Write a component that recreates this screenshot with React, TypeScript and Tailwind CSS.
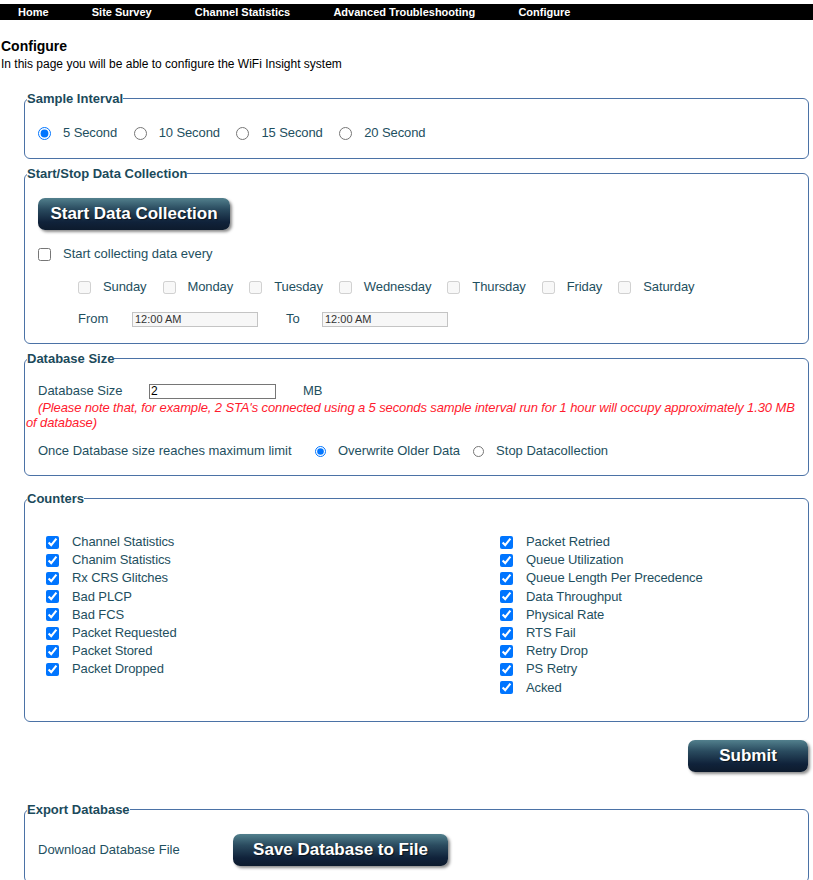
import React from "react";

const TEXT = "text-[#1e4f60]";

function Legend({ children }: { children: React.ReactNode }) {
  return (
    <legend className="ml-[2px] text-[13px] leading-[15px] font-bold text-[#1b4a5b]">
      {children}
    </legend>
  );
}

function DarkButton({ children, className }: { children: React.ReactNode; className: string }) {
  return (
    <button
      type="button"
      className={
        "h-[32px] rounded-[7px] bg-[linear-gradient(to_bottom,#52808d_0%,#2a4b5f_35%,#10223a_75%,#0d1b2d_100%)] text-white text-[17px] font-bold leading-[32px] shadow-[2px_2px_3px_rgba(0,0,0,0.45)] [text-shadow:1px_1px_1px_rgba(0,0,0,0.6)] " +
        className
      }
    >
      {children}
    </button>
  );
}

const leftCounters = [
  "Channel Statistics",
  "Chanim Statistics",
  "Rx CRS Glitches",
  "Bad PLCP",
  "Bad FCS",
  "Packet Requested",
  "Packet Stored",
  "Packet Dropped",
];
const rightCounters = [
  "Packet Retried",
  "Queue Utilization",
  "Queue Length Per Precedence",
  "Data Throughput",
  "Physical Rate",
  "RTS Fail",
  "Retry Drop",
  "PS Retry",
  "Acked",
];
const days = ["Sunday", "Monday", "Tuesday", "Wednesday", "Thursday", "Friday", "Saturday"];
const intervals = ["5 Second", "10 Second", "15 Second", "20 Second"];

function CounterCol({ items }: { items: string[] }) {
  return (
    <div className="flex flex-col">
      {items.map((it) => (
        <label key={it} className="flex h-[18.2px] items-center">
          <input type="checkbox" defaultChecked className="m-0 h-[13px] w-[13px]" />
          <span className="ml-[13px] text-[13px] leading-[16px] tracking-[-0.1px]">{it}</span>
        </label>
      ))}
    </div>
  );
}

export default function App() {
  return (
    <div className={"min-h-[880px] bg-white font-['Liberation_Sans',Arial,sans-serif] " + TEXT}>
      {/* Top navigation */}
      <div className="mt-[4px] flex h-[16px] items-center gap-[43.2px] bg-black pl-[18px] text-[11px] font-bold leading-[16px] text-white">
        <span>Home</span>
        <span>Site Survey</span>
        <span>Channel Statistics</span>
        <span>Advanced Troubleshooting</span>
        <span>Configure</span>
      </div>

      <div className="mt-[18px] pl-[1px] text-[14px] font-bold leading-[16px] text-black">Configure</div>
      <div className="mt-[3px] pl-[1px] text-[12px] leading-[14px] text-black">
        In this page you will be able to configure the WiFi Insight system
      </div>

      {/* Sample Interval */}
      <fieldset className="mt-[20px] ml-[24px] mr-[4px] rounded-[6px] border border-[#4b72a6] pt-[19px] pb-[17px]">
        <Legend>Sample Interval</Legend>
        <div className="flex h-[16px] items-center gap-[16.5px] pl-[13px] text-[13px] leading-[16px] tracking-[-0.1px]">
          {intervals.map((v, i) => (
            <label key={v} className="flex items-center">
              <input type="radio" name="interval" defaultChecked={i === 0} className="m-0 h-[13px] w-[13px]" />
              <span className="ml-[12px]">{v}</span>
            </label>
          ))}
        </div>
      </fieldset>

      {/* Start/Stop Data Collection */}
      <fieldset className="mt-[7px] ml-[24px] mr-[4px] rounded-[6px] border border-[#4b72a6] pt-[17px] pb-[16px]">
        <Legend>Start/Stop Data Collection</Legend>
        <div className="pl-[13px]">
          <DarkButton className="w-[192px]">Start Data Collection</DarkButton>
        </div>
        <label className="mt-[16px] flex h-[16px] items-center pl-[13px] text-[13px] leading-[16px]">
          <input type="checkbox" className="m-0 h-[13px] w-[13px]" />
          <span className="ml-[12px]">Start collecting data every</span>
        </label>
        <div className="mt-[17px] flex h-[16px] items-center gap-[16px] pl-[53px] text-[13px] leading-[16px] tracking-[-0.1px]">
          {days.map((d) => (
            <label key={d} className="flex items-center">
              <input type="checkbox" disabled className="m-0 h-[13px] w-[13px]" />
              <span className="ml-[12px]">{d}</span>
            </label>
          ))}
        </div>
        <div className="mt-[16px] flex h-[16px] items-center pl-[53px] text-[13px] leading-[16px]">
          <span className="w-[54px]">From</span>
          <input
            readOnly
            value="12:00 AM"
            className="h-[15px] w-[126px] border border-[#c4c4c4] bg-[#f7f7f7] px-[2px] text-[11px] leading-[13px] text-[#333333]"
          />
          <span className="ml-[28px] w-[36px]">To</span>
          <input
            readOnly
            value="12:00 AM"
            className="h-[15px] w-[126px] border border-[#c4c4c4] bg-[#f7f7f7] px-[2px] text-[11px] leading-[13px] text-[#333333]"
          />
        </div>
      </fieldset>

      {/* Database Size */}
      <fieldset className="mt-[7px] ml-[24px] mr-[4px] rounded-[6px] border border-[#4b72a6] pt-[17px] pb-[16px]">
        <Legend>Database Size</Legend>
        <div className="flex h-[16px] items-center pl-[13px] text-[13px] leading-[16px]">
          <span className="w-[111px]">Database Size</span>
          <input
            defaultValue="2"
            className="h-[15px] w-[127px] border border-[#767676] bg-white px-[1px] text-[12px] leading-[13px] text-black"
          />
          <span className="ml-[27px]">MB</span>
        </div>
        <div className="mt-[1px] pl-[1px] pr-[1px] indent-[12px] text-[13px] italic leading-[15px] tracking-[-0.12px] text-[#ff1a2e]">
          (Please note that, for example, 2 STA's connected using a 5 seconds sample interval run for 1 hour will
          occupy approximately 1.30 MB of database)
        </div>
        <div className="mt-[13px] flex h-[16px] items-center pl-[13px] text-[13px] leading-[16px]">
          <span className="w-[277px]">Once Database size reaches maximum limit</span>
          <label className="flex items-center">
            <input type="radio" name="dbfull" defaultChecked className="m-0 h-[11px] w-[11px]" />
            <span className="ml-[12px]">Overwrite Older Data</span>
          </label>
          <label className="ml-[13px] flex items-center">
            <input type="radio" name="dbfull" className="m-0 h-[11px] w-[11px]" />
            <span className="ml-[12px]">Stop Datacollection</span>
          </label>
        </div>
      </fieldset>

      {/* Counters */}
      <fieldset className="mt-[15px] ml-[24px] mr-[4px] rounded-[6px] border border-[#4b72a6] pt-[27px] pb-[24px]">
        <Legend>Counters</Legend>
        <div className="grid grid-cols-[454px_1fr] pl-[21px]">
          <CounterCol items={leftCounters} />
          <CounterCol items={rightCounters} />
        </div>
      </fieldset>

      <div className="mt-[18px] flex justify-end pr-[5px]">
        <DarkButton className="w-[120px]">Submit</DarkButton>
      </div>

      {/* Export Database */}
      <fieldset className="mt-[30px] ml-[24px] mr-[4px] rounded-[6px] border border-[#4b72a6] pt-[17px] pb-[16px]">
        <Legend>Export Database</Legend>
        <div className="flex items-center pl-[13px] text-[13px] leading-[16px]">
          <span className="w-[195px]">Download Database File</span>
          <DarkButton className="w-[215px]">Save Database to File</DarkButton>
        </div>
      </fieldset>
    </div>
  );
}
